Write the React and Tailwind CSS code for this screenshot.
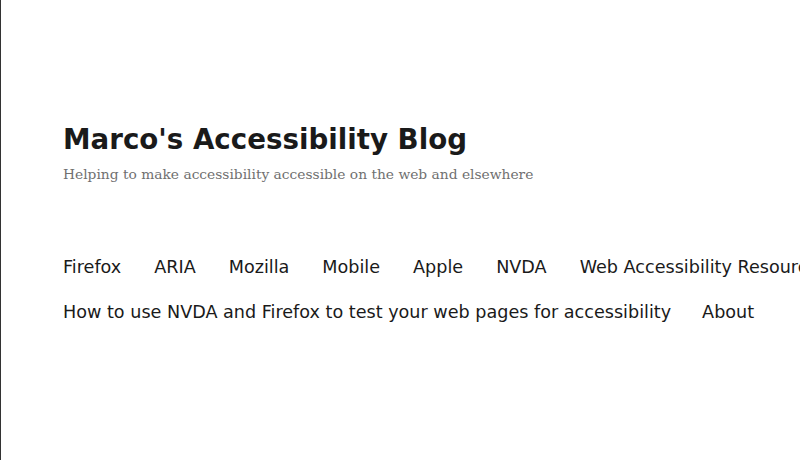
import React from 'react';

const navTop = ['Firefox', 'ARIA', 'Mozilla', 'Mobile', 'Apple', 'NVDA', 'Web Accessibility Resources'];
const navBottom = ['How to use NVDA and Firefox to test your web pages for accessibility', 'About'];

export default function App() {
  return (
    <div className="h-screen w-full overflow-hidden bg-white border-l border-[#333]">
      <header className="pl-[62px] pt-[120px]">
        <h1 className="text-[27.7px] leading-[40px] font-bold text-[#1a1a1a] whitespace-nowrap" style={{ fontFamily: '"DejaVu Sans", sans-serif' }}>
          Marco's Accessibility Blog
        </h1>
        <p className="mt-[2px] text-[13.8px] leading-[24px] text-[#707070] whitespace-nowrap" style={{ fontFamily: '"DejaVu Serif", serif' }}>
          Helping to make accessibility accessible on the web and elsewhere
        </p>
      </header>
      <nav className="pl-[62px] mt-[59px] text-[17.6px] text-[#1a1a1a] whitespace-nowrap" style={{ fontFamily: '"DejaVu Sans", sans-serif' }}>
        <ul className="flex gap-[33px] leading-[45px]">
          {navTop.map((item) => (
            <li key={item}>{item}</li>
          ))}
        </ul>
        <ul className="flex gap-[31px] leading-[45px]">
          {navBottom.map((item) => (
            <li key={item}>{item}</li>
          ))}
        </ul>
      </nav>
    </div>
  );
}
